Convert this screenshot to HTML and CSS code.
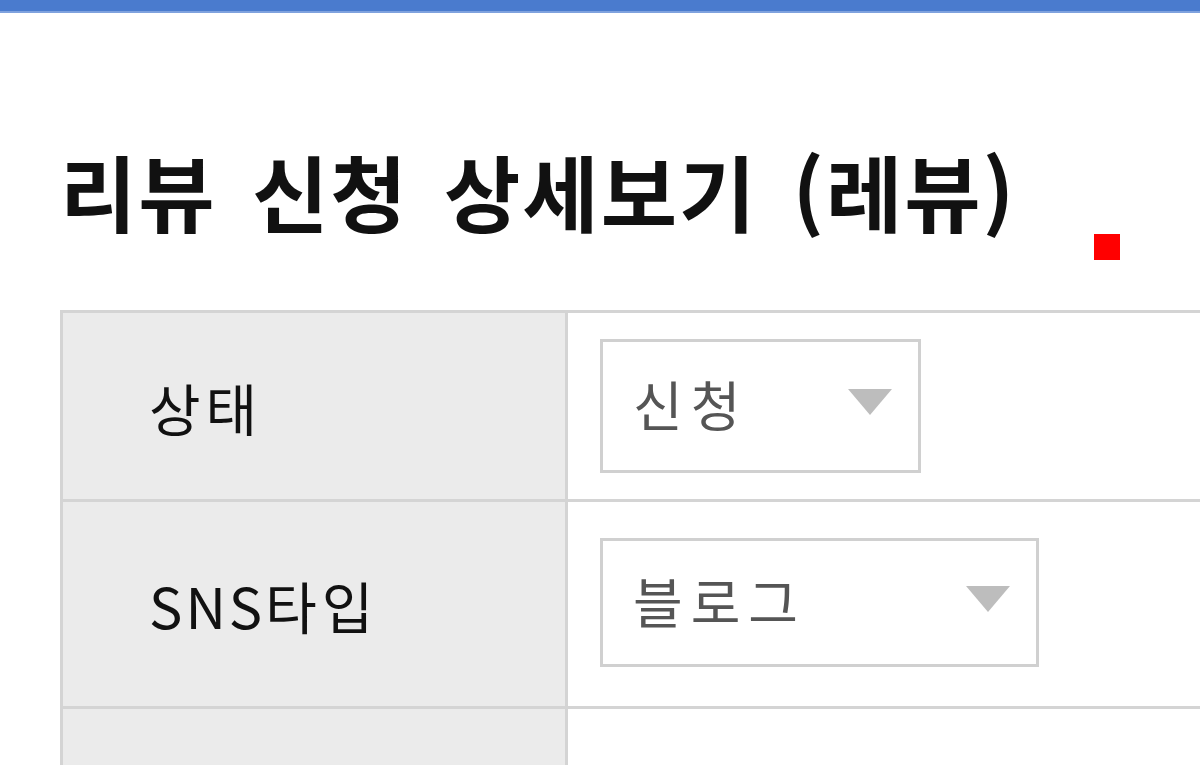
FILE: index.html
```html
<!DOCTYPE html>
<html lang="ko">
<head>
<meta charset="utf-8">
<link rel="stylesheet" href="styles.css">
</head>
<body>
<div class="topbar"></div>
<main class="content">
  <div class="title-row">
    <h1 class="title">리뷰 신청 상세보기 (레뷰)</h1>
    <span class="marker"></span>
  </div>
  <table class="detail">
    <tr class="row-status">
      <th>상태</th>
      <td>
        <div class="select select-status">
          <span class="select-text">신청</span>
          <span class="arrow"></span>
        </div>
      </td>
    </tr>
    <tr class="row-sns">
      <th><span class="latin">SNS</span>타입</th>
      <td>
        <div class="select select-sns">
          <span class="select-text">블로그</span>
          <span class="arrow"></span>
        </div>
      </td>
    </tr>
    <tr class="row-empty">
      <th></th>
      <td></td>
    </tr>
  </table>
</main>
</body>
</html>
```

FILE: styles.css
```css
html, body {
  margin: 0;
  padding: 0;
  background: #ffffff;
  overflow: hidden;
  width: 1200px;
  height: 765px;
}

body {
  font-family: "Noto Sans CJK KR", "Noto Sans", sans-serif;
  color: #111;
}

.topbar {
  height: 11px;
  background: #4a7bce;
  border-bottom: 2px solid #7fa2de;
}

.content {
  padding: 0 0 0 60px;
}

.title-row {
  display: flex;
  align-items: flex-start;
  padding-top: 122px;
  height: 175px;
  box-sizing: content-box;
}

.title {
  margin: 0;
  font-size: 83px;
  line-height: 110px;
  font-weight: 600;
  letter-spacing: 2px;
  word-spacing: 10px;
  color: #111;
  white-space: nowrap;
}

.marker {
  width: 26px;
  height: 26px;
  background: #ff0000;
  margin-left: 78px;
  margin-top: 99px;
  flex: none;
}

.detail {
  border-collapse: collapse;
  width: 1300px;
  margin-top: 0;
}

.detail th,
.detail td {
  border: 3px solid #d4d4d4;
  padding: 0;
}

.detail th {
  width: 505px;
  background: #ebebeb;
  text-align: left;
  font-weight: 400;
  font-size: 56px;
  letter-spacing: 5px;
  color: #111;
  padding-left: 86px;
  box-sizing: border-box;
}

.detail th .latin {
  letter-spacing: 3px;
}

.row-status th, .row-status td { height: 186px; }
.row-sns th, .row-sns td { height: 204px; }
.row-empty th, .row-empty td { height: 120px; }

.detail td {
  background: #fff;
  padding-left: 32px;
}

.select {
  display: flex;
  align-items: center;
  justify-content: space-between;
  border: 3px solid #d0d0d0;
  box-sizing: border-box;
  padding: 0 26px 0 30px;
  background: #fff;
}

.select-status {
  width: 321px;
  height: 134px;
  margin-top: 0;
}

.select-sns {
  width: 439px;
  height: 129px;
  margin-top: -3px;
}

.select-text {
  font-size: 54px;
  letter-spacing: 8px;
  color: #555;
  line-height: 1;
  padding-bottom: 4px;
}

.arrow {
  width: 0;
  height: 0;
  border-left: 22px solid transparent;
  border-right: 22px solid transparent;
  border-top: 26px solid #bdbdbd;
  margin-bottom: 8px;
}
```
